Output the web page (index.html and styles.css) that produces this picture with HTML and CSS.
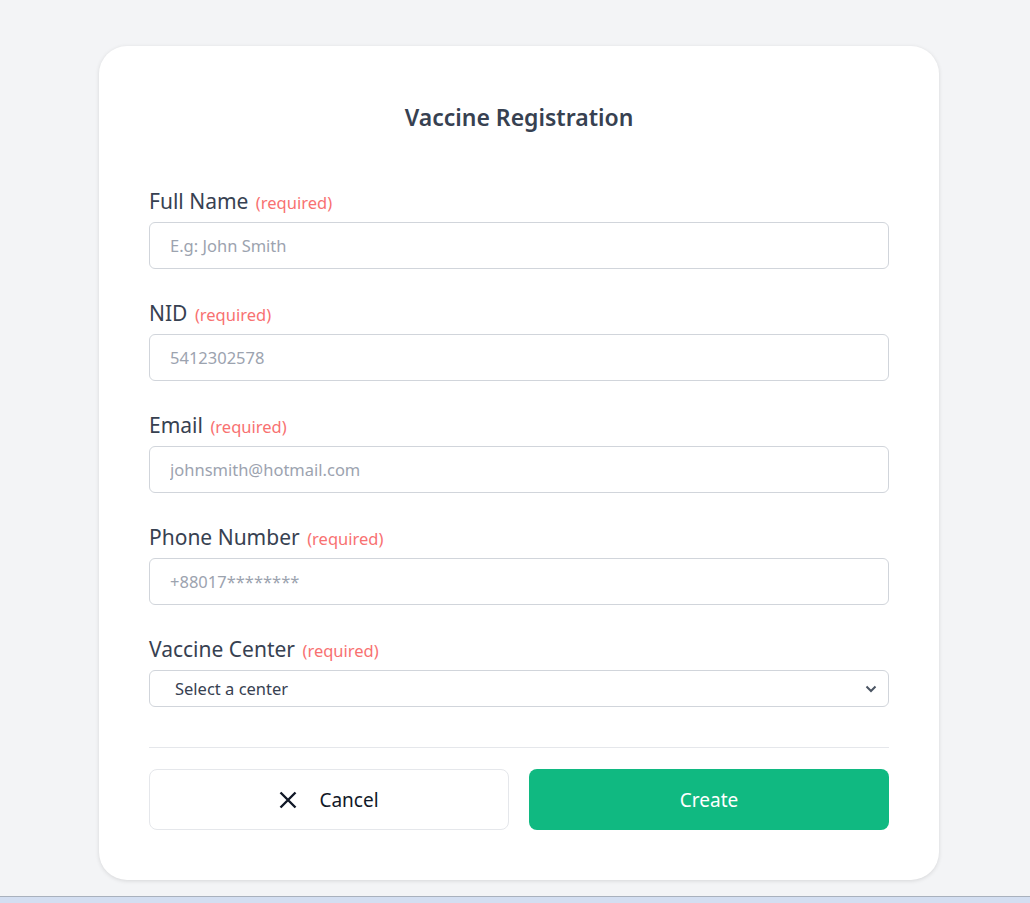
FILE: index.html
```html
<!DOCTYPE html>
<html lang="en">
<head>
<meta charset="utf-8">
<title>Vaccine Registration</title>
<link rel="stylesheet" href="styles.css">
</head>
<body>
<main class="page">
  <form class="card">
    <h1 class="title">Vaccine Registration</h1>
    <div class="field">
      <label class="label">Full Name <span class="req">(required)</span></label>
      <input class="input" type="text" placeholder="E.g: John Smith">
    </div>
    <div class="field">
      <label class="label">NID <span class="req">(required)</span></label>
      <input class="input" type="text" placeholder="5412302578">
    </div>
    <div class="field">
      <label class="label">Email <span class="req">(required)</span></label>
      <input class="input" type="text" placeholder="johnsmith@hotmail.com">
    </div>
    <div class="field">
      <label class="label">Phone Number <span class="req">(required)</span></label>
      <input class="input" type="text" placeholder="+88017********">
    </div>
    <div class="field field-last">
      <label class="label">Vaccine Center <span class="req">(required)</span></label>
      <div class="select">
        <span class="select-text">Select a center</span>
        <svg class="chev" width="12" height="8" viewBox="0 0 12 8"><path d="M1.5 1.5 L6 6 L10.5 1.5" fill="none" stroke="#4b5563" stroke-width="2"/></svg>
      </div>
    </div>
    <hr class="divider">
    <div class="actions">
      <button type="button" class="btn btn-cancel">
        <svg width="18" height="18" viewBox="0 0 18 18"><path d="M1.5 1.5 L16.5 16.5 M16.5 1.5 L1.5 16.5" stroke="#111827" stroke-width="2.4" fill="none"/></svg>
        <span>Cancel</span>
      </button>
      <button type="button" class="btn btn-create">Create</button>
    </div>
  </form>
</main>
<div class="taskbar"></div>
</body>
</html>
```
FILE: styles.css
```css
* { box-sizing: border-box; }
html, body { margin: 0; padding: 0; }
body {
  background: #f3f4f6;
  font-family: "Noto Sans", "Open Sans", sans-serif;
  color: #374151;
  height: 100vh;
  display: flex;
  flex-direction: column;
  overflow: hidden;
}
.page {
  flex: 1;
  display: flex;
  justify-content: center;
  padding-top: 46px;
  padding-left: 8px;
}
.card {
  width: 840px;
  height: 834px;
  background: #fff;
  border-radius: 28px;
  box-shadow: 0 1px 4px rgba(0,0,0,0.12);
  padding: 50px 50px;
  display: flex;
  flex-direction: column;
}
.title {
  margin: 0;
  text-align: center;
  font-size: 23px;
  font-weight: 600;
  color: #374151;
  line-height: 42px;
  margin-bottom: 50px;
}
.field {
  display: flex;
  flex-direction: column;
  margin-bottom: 31px;
}
.field-last { margin-bottom: 40px; }
.label {
  display: block;
  height: 26px;
  font-size: 21px;
  line-height: 26px;
  color: #374151;
  margin-bottom: 8px;
  white-space: nowrap;
}
.req {
  font-size: 16.5px;
  line-height: 1;
  color: #f87171;
  margin-left: 2px;
}
.input {
  height: 47px;
  flex: none;
  border: 1px solid #d1d5db;
  border-radius: 6px;
  padding: 0 20px;
  font-family: inherit;
  font-size: 16.5px;
  color: #374151;
  outline: none;
}
.input::placeholder { color: #9ca3af; }
.select {
  height: 37px;
  flex: none;
  border: 1px solid #d1d5db;
  border-radius: 6px;
  padding: 0 11px 0 25px;
  display: flex;
  align-items: center;
  justify-content: space-between;
  font-size: 16.5px;
  color: #374151;
}
.divider {
  border: 0;
  border-top: 1px solid #e5e7eb;
  margin: 0 0 21px;
}
.actions {
  display: grid;
  grid-template-columns: 1fr 1fr;
  gap: 20px;
}
.btn {
  height: 61px;
  border-radius: 8px;
  font-family: inherit;
  font-size: 19px;
  display: flex;
  align-items: center;
  justify-content: center;
  cursor: pointer;
}
.btn-cancel {
  background: #fff;
  border: 1px solid #e5e7eb;
  color: #111827;
  gap: 22px;
}
.btn-create {
  background: #10b981;
  border: 0;
  color: #fff;
}
.taskbar {
  height: 7px;
  border-top: 1px solid #a9b1bd;
  background: #d3def1;
  flex: none;
}
```
